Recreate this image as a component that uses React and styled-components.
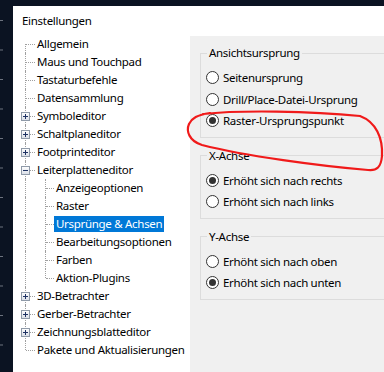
import styled, { createGlobalStyle } from "styled-components";

const GlobalStyle = createGlobalStyle`
  html, body {
    margin: 0;
    padding: 0;
    background: #0b1322;
  }
  body {
    font-family: "Noto Sans", "Liberation Sans", sans-serif;
    font-size: 11.5px;
    letter-spacing: -0.3px;
    color: #000;
  }
`;

const Screen = styled.div`
  position: relative;
  display: flex;
  width: 384px;
  height: 372px;
  overflow: hidden;
  background: #0b1322;
`;

const Rail = styled.div`
  width: 13px;
  flex: none;
  background: linear-gradient(to bottom, #6e7480 0 1px, transparent 1px 100%) 0 20px / 3px 29.5px repeat-y;
`;

const Dialog = styled.div`
  flex: 1;
  margin-top: 6px;
  background: #fff;
  display: flex;
  flex-direction: column;
  min-width: 0;
`;

const TitleBar = styled.div`
  height: 29px;
  padding-left: 9px;
  display: flex;
  align-items: center;
  flex: none;
`;

const Body = styled.div`
  flex: 1;
  display: flex;
  min-height: 0;
`;

const Tree = styled.div`
  width: 177px;
  flex: none;
  padding-left: 3px;
  box-sizing: border-box;
`;

const Row = styled.div`
  display: flex;
  align-items: center;
  height: 18px;
  white-space: nowrap;
`;

const Guide = styled.span`
  position: relative;
  width: 19px;
  height: 18px;
  flex: none;

  &::before {
    content: "";
    display: ${(p) => (p.$line ? "block" : "none")};
    position: absolute;
    left: ${(p) => p.$x}px;
    top: ${(p) => (p.$line === "first" ? "9px" : "0")};
    bottom: ${(p) => (p.$line === "last" ? "9px" : "0")};
    border-left: 1px dotted #a0a0a0;
  }

  &::after {
    content: "";
    display: ${(p) => (p.$branch ? "block" : "none")};
    position: absolute;
    left: ${(p) => p.$x + 1}px;
    right: 0;
    top: 9px;
    border-top: 1px dotted #a0a0a0;
  }
`;

const Expander = styled.svg`
  position: absolute;
  left: ${(p) => p.$x - 4}px;
  top: 5px;
  z-index: 1;
`;

const Label = styled.span`
  height: 16px;
  line-height: 16px;
  padding: 0 2px;
  background: ${(p) => (p.$selected ? "#0078d7" : "transparent")};
  color: ${(p) => (p.$selected ? "#fff" : "#000")};
`;

const Panel = styled.div`
  flex: 1;
  margin-top: 1px;
  background: #f0f0f0;
  padding-left: 10px;
  overflow: hidden;
`;

const Group = styled.fieldset`
  margin: ${(p) => (p.$first ? "9px" : "10px")} -40px 0 0;
  padding: 6px 0 5px 5px;
  border: 1px solid #dcdcdc;
  min-width: 0;
`;

const Legend = styled.legend`
  margin-left: 1px;
  padding: 0 2px;
  line-height: 16px;
`;

const Option = styled.label`
  display: flex;
  align-items: center;
  gap: 4px;
  height: 21.5px;
  white-space: nowrap;
`;

const Radio = styled.span`
  width: 13px;
  height: 13px;
  box-sizing: border-box;
  border: 1px solid #333;
  border-radius: 50%;
  background: #fff;
  display: grid;
  place-items: center;
  flex: none;

  &::after {
    content: "";
    display: ${(p) => (p.$checked ? "block" : "none")};
    width: 7px;
    height: 7px;
    border-radius: 50%;
    background: #333;
  }
`;

const Scribble = styled.svg`
  position: absolute;
  left: 0;
  top: 0;
  pointer-events: none;
`;

function Box({ x, open }) {
  return (
    <Expander $x={x} width="9" height="9" viewBox="0 0 9 9">
      <defs>
        <linearGradient id="exg" x1="0" y1="0" x2="0" y2="1">
          <stop offset="0" stopColor="#ffffff" />
          <stop offset="1" stopColor="#d8dde6" />
        </linearGradient>
      </defs>
      <rect x="0.5" y="0.5" width="8" height="8" fill="url(#exg)" stroke="#8f9aa8" />
      <path d="M2 4.5h5" stroke="#1e3263" strokeWidth="1" />
      {!open && <path d="M4.5 2v5" stroke="#1e3263" strokeWidth="1" />}
    </Expander>
  );
}

const items = [
  { label: "Allgemein", pos: "first" },
  { label: "Maus und Touchpad" },
  { label: "Tastaturbefehle" },
  { label: "Datensammlung" },
  { label: "Symboleditor", exp: "closed" },
  { label: "Schaltplaneditor", exp: "closed" },
  { label: "Footprinteditor", exp: "closed" },
  { label: "Leiterplatteneditor", exp: "open" },
  { label: "Anzeigeoptionen", child: true },
  { label: "Raster", child: true },
  { label: "Ursprünge & Achsen", child: true, selected: true },
  { label: "Bearbeitungsoptionen", child: true },
  { label: "Farben", child: true },
  { label: "Aktion-Plugins", child: true, pos: "last" },
  { label: "3D-Betrachter", exp: "closed" },
  { label: "Gerber-Betrachter", exp: "closed" },
  { label: "Zeichnungsblatteditor", exp: "closed" },
  { label: "Pakete und Aktualisierungen", pos: "last" },
];

const groups = [
  {
    title: "Ansichtsursprung",
    options: ["Seitenursprung", "Drill/Place-Datei-Ursprung", "Raster-Ursprungspunkt"],
    checked: 2,
  },
  {
    title: "X-Achse",
    options: ["Erhöht sich nach rechts", "Erhöht sich nach links"],
    checked: 0,
  },
  {
    title: "Y-Achse",
    options: ["Erhöht sich nach oben", "Erhöht sich nach unten"],
    checked: 1,
  },
];

export default function App() {
  return (
    <>
      <GlobalStyle />
      <Screen>
        <Rail />
        <Dialog>
          <TitleBar>Einstellungen</TitleBar>
          <Body>
            <Tree>
              {items.map((it) =>
                it.child ? (
                  <Row key={it.label}>
                    <Guide $x={9} $line="pass" />
                    <Guide $x={10} $line={it.pos || "pass"} $branch />
                    <Label $selected={it.selected}>{it.label}</Label>
                  </Row>
                ) : (
                  <Row key={it.label}>
                    <Guide $x={9} $line={it.pos || "pass"} $branch>
                      {it.exp && <Box x={9} open={it.exp === "open"} />}
                    </Guide>
                    <Label>{it.label}</Label>
                  </Row>
                )
              )}
            </Tree>
            <Panel>
              {groups.map((g, gi) => (
                <Group key={g.title} $first={gi === 0}>
                  <Legend>{g.title}</Legend>
                  {g.options.map((o, oi) => (
                    <Option key={o}>
                      <Radio $checked={oi === g.checked} />
                      {o}
                    </Option>
                  ))}
                </Group>
              ))}
            </Panel>
          </Body>
        </Dialog>
        <Scribble width="384" height="372" viewBox="0 0 384 372">
          <path
            d="M203 114 C240 110, 310 111, 360 116 C376 122, 383 138, 382 156 C381 167, 377 171, 368 170 C320 166, 245 156, 202 145 C189 141, 186 131, 189 124 C192 118, 197 115, 210 113"
            fill="none"
            stroke="#f01a1a"
            strokeWidth="2.2"
            strokeLinecap="round"
          />
        </Scribble>
      </Screen>
    </>
  );
}
